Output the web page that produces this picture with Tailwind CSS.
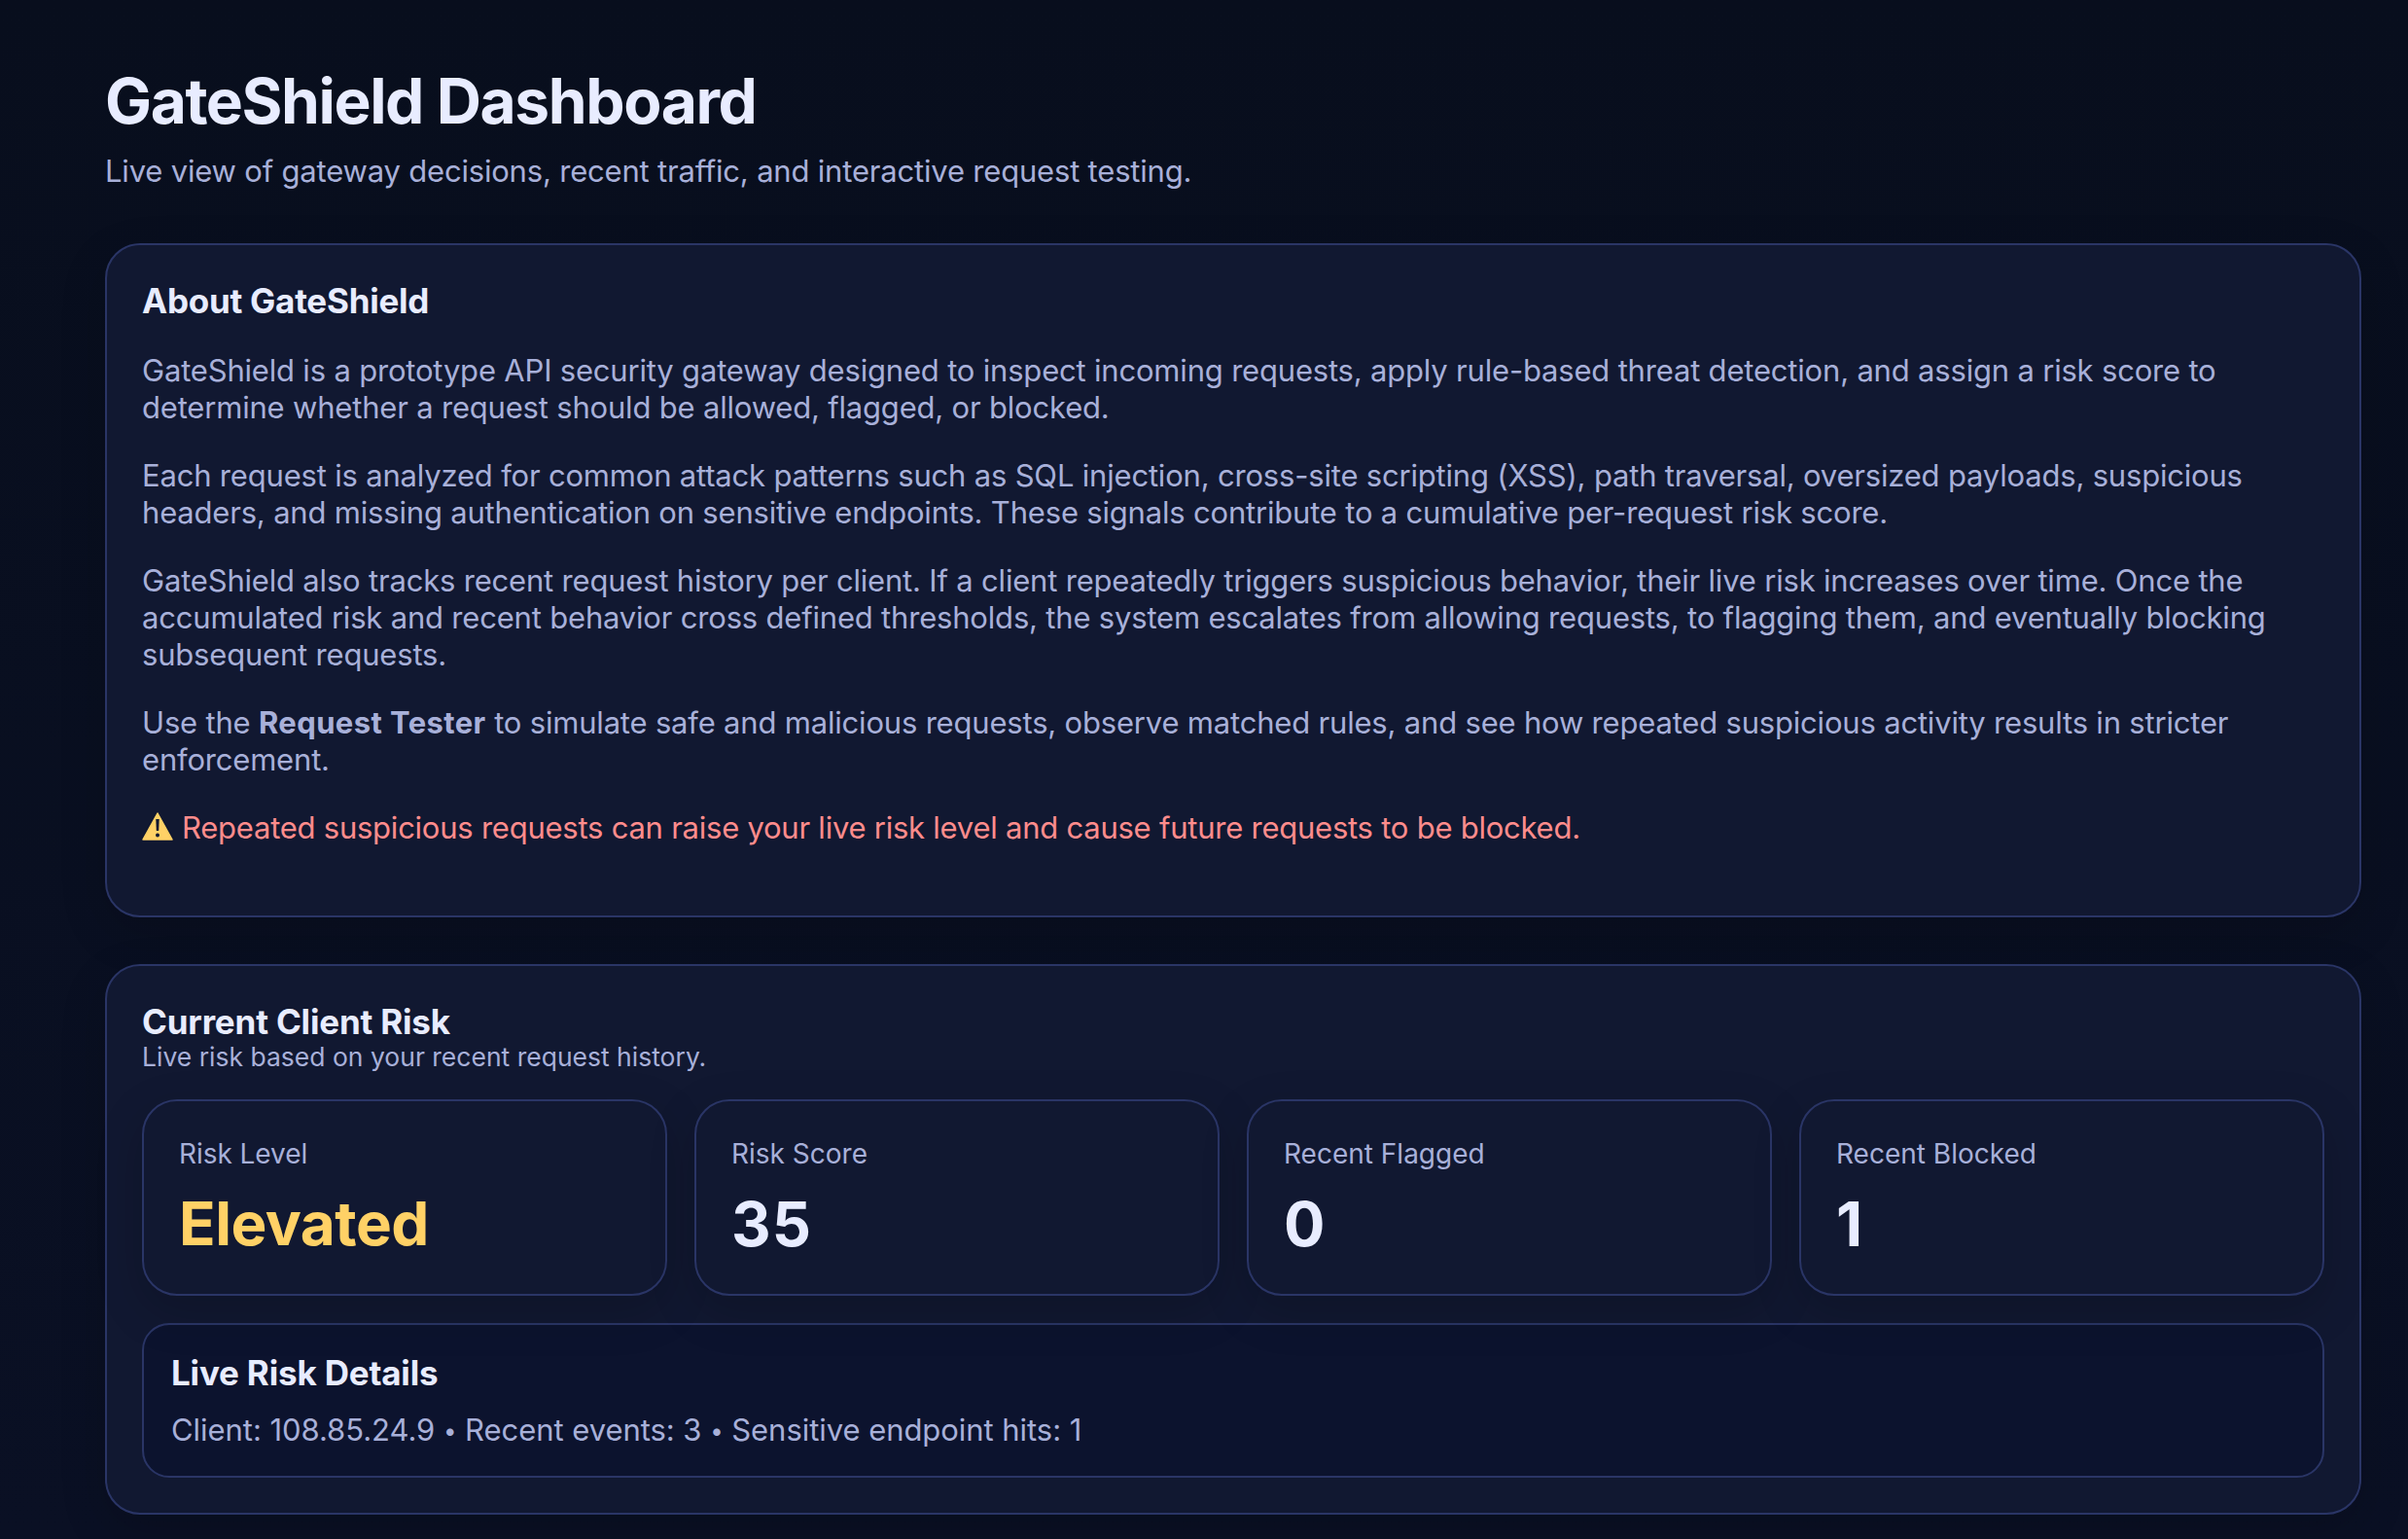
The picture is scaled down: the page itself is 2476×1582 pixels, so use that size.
<!DOCTYPE html>
<html lang="en">
<head>
    <meta charset="UTF-8">
    <meta name="viewport" content="width=device-width, initial-scale=1.0">
    <title>GateShield Dashboard</title>
    <script src="https://cdn.jsdelivr.net/npm/@tailwindcss/browser@4"></script>
</head>
<body class="h-[1582px] overflow-hidden bg-linear-to-b from-[#080e1d] to-[#0a1024] font-['Inter',sans-serif] text-[#e8ecff]">
    <div class="w-[2320px] ml-[108px] pt-[65px]">
        <!-- Page Header -->
        <header class="h-[185px]">
            <h1 class="text-[64px] leading-[78px] font-bold tracking-[-1.4px]">GateShield Dashboard</h1>
            <p class="mt-[14px] text-[31px] leading-[38px] tracking-[-0.19px] text-[#a8b0d9]">Live view of gateway decisions, recent traffic, and interactive request testing.</p>
        </header>

        <!-- About -->
        <section class="h-[693px] rounded-[36px] border-2 border-[#2a3566] bg-[#111831] p-[36px] shadow-[0_16px_48px_rgba(0,0,0,0.16)]">
            <h2 class="text-[35px] leading-[42px] font-bold tracking-[-0.25px]">About GateShield</h2>
            <div class="mt-[32px] space-y-[32px] text-[31px] leading-[38px] tracking-[-0.19px] text-[#a8b0d9] whitespace-nowrap">
                <p>GateShield is a prototype API security gateway designed to inspect incoming requests, apply rule-based threat detection, and assign a risk score to<br>determine whether a request should be allowed, flagged, or blocked.</p>
                <p>Each request is analyzed for common attack patterns such as SQL injection, cross-site scripting (XSS), path traversal, oversized payloads, suspicious<br>headers, and missing authentication on sensitive endpoints. These signals contribute to a cumulative per-request risk score.</p>
                <p>GateShield also tracks recent request history per client. If a client repeatedly triggers suspicious behavior, their live risk increases over time. Once the<br>accumulated risk and recent behavior cross defined thresholds, the system escalates from allowing requests, to flagging them, and eventually blocking<br>subsequent requests.</p>
                <p>Use the <strong class="font-bold tracking-[0.4px]">Request Tester</strong> to simulate safe and malicious requests, observe matched rules, and see how repeated suspicious activity results in stricter<br>enforcement.</p>
                <p class="flex text-[#ff8c8c] tracking-[-0.24px]">
                    <svg class="mt-[3px] mr-[9px] h-[30px] w-[32px]" viewBox="0 0 32 30"><path d="M16 1 31 28H1Z" fill="#ffd166" stroke="#ffd166" stroke-width="1.500" stroke-linejoin="round"/><path d="M14.300 7h3.400l-.5 12h-2.400Z" fill="#111831"/><circle cx="16" cy="23.500" r="2" fill="#111831"/></svg>
                    Repeated suspicious requests can raise your live risk level and cause future requests to be blocked.
                </p>
            </div>
        </section>

        <!-- Current Client Risk -->
        <section class="mt-[48px] h-[566px] rounded-[36px] border-2 border-[#2a3566] bg-[#111831] p-[36px] shadow-[0_16px_48px_rgba(0,0,0,0.16)]">
            <h2 class="text-[35px] leading-[42px] font-bold tracking-[-0.18px]">Current Client Risk</h2>
            <p class="h-[59px] text-[26.500px] leading-[30px] text-[#a8b0d9]">Live risk based on your recent request history.</p>
            <div class="grid grid-cols-4 gap-[28px]">
                <div class="h-[202px] rounded-[36px] border-2 border-[#2a3566] bg-[#111831] p-[36px] shadow-[0_16px_48px_rgba(0,0,0,0.18)]">
                    <p class="text-[28px] leading-[36px] tracking-[-0.05px] text-[#a8b0d9]">Risk Level</p>
                    <p class="mt-[16px] text-[62px] leading-[76px] font-bold tracking-[-0.5px] text-[#ffd166]">Elevated</p>
                </div>
                <div class="h-[202px] rounded-[36px] border-2 border-[#2a3566] bg-[#111831] p-[36px] shadow-[0_16px_48px_rgba(0,0,0,0.18)]">
                    <p class="text-[28px] leading-[36px] text-[#a8b0d9]">Risk Score</p>
                    <p class="mt-[16px] text-[63px] leading-[76px] font-bold tracking-[1px]">35</p>
                </div>
                <div class="h-[202px] rounded-[36px] border-2 border-[#2a3566] bg-[#111831] p-[36px] shadow-[0_16px_48px_rgba(0,0,0,0.18)]">
                    <p class="text-[28px] leading-[36px] text-[#a8b0d9]">Recent Flagged</p>
                    <p class="mt-[16px] text-[63px] leading-[76px] font-bold">0</p>
                </div>
                <div class="h-[202px] rounded-[36px] border-2 border-[#2a3566] bg-[#111831] p-[36px] shadow-[0_16px_48px_rgba(0,0,0,0.18)]">
                    <p class="text-[28px] leading-[36px] text-[#a8b0d9]">Recent Blocked</p>
                    <p class="mt-[16px] text-[63px] leading-[76px] font-bold">1</p>
                </div>
            </div>
            <div class="mt-[28px] h-[159px] rounded-[28px] border-2 border-[#2a3566] bg-[#0c132e] p-[28px]">
                <h3 class="text-[35px] leading-[43px] font-bold tracking-[-0.18px]">Live Risk Details</h3>
                <p class="mt-[18px] text-[31px] leading-[38px] tracking-[-0.05px] text-[#a8b0d9]">Client: 108.85.24.9 <span class="align-[2px] text-[24px] leading-none">•</span> Recent events: 3 <span class="align-[2px] text-[24px] leading-none">•</span> Sensitive endpoint hits: 1</p>
            </div>
        </section>
    </div>
</body>
</html>
